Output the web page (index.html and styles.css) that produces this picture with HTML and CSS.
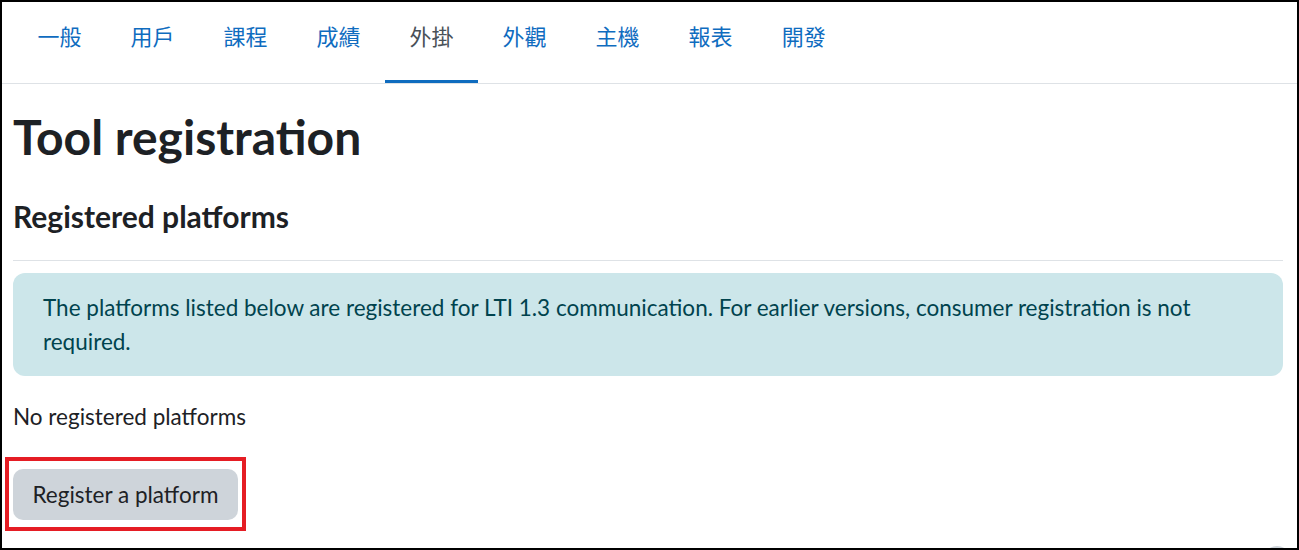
FILE: index.html
```html
<!DOCTYPE html>
<html lang="zh-Hant">
<head>
<meta charset="utf-8">
<title>Tool registration</title>
<link rel="stylesheet" href="styles.css">
</head>
<body>
<div class="frame">
  <nav class="tabs">
    <a class="tab" href="#">一般</a>
    <a class="tab" href="#">用戶</a>
    <a class="tab" href="#">課程</a>
    <a class="tab" href="#">成績</a>
    <a class="tab active" href="#">外掛</a>
    <a class="tab" href="#">外觀</a>
    <a class="tab" href="#">主機</a>
    <a class="tab" href="#">報表</a>
    <a class="tab" href="#">開發</a>
  </nav>
  <main class="content">
    <h1 class="page-title">Tool registration</h1>
    <h2 class="section-title">Registered platforms</h2>
    <hr class="divider">
    <div class="alert">The platforms listed below are registered for LTI 1.3 communication. For earlier versions, consumer registration is not required.</div>
    <p class="empty">No registered platforms</p>
    <div class="actions">
      <button class="btn" type="button">Register a platform</button>
    </div>
  </main>
  <span class="float-btn"></span>
</div>
</body>
</html>
```
FILE: styles.css
```css
html, body {
  margin: 0;
  padding: 0;
  background: #ffffff;
}
body {
  font-family: Lato, "Noto Sans CJK TC", sans-serif;
  color: #1d2125;
}
.frame {
  position: relative;
  box-sizing: border-box;
  width: 1299px;
  height: 550px;
  border: 2px solid #000000;
  overflow: hidden;
}
.tabs {
  display: flex;
  padding-left: 11px;
  border-bottom: 1px solid #dee2e6;
  height: 81px;
}
.tab {
  box-sizing: border-box;
  display: block;
  height: 81px;
  padding: 17px 24.5px 0;
  font-family: "Noto Sans CJK TC", sans-serif;
  font-size: 22px;
  line-height: 33px;
  color: #0f6cbf;
  text-decoration: none;
  border-bottom: 3px solid transparent;
}
.tab.active {
  color: #495057;
  border-bottom-color: #0f6cbf;
}
.content {
  padding: 0 14px 0 11px;
}
.page-title {
  margin: 24px 0 0;
  font-size: 48px;
  line-height: 58px;
  font-weight: 700;
  color: #1d2125;
}
.section-title {
  margin: 32px 0 0;
  font-size: 30px;
  line-height: 36px;
  font-weight: 700;
  color: #1d2125;
}
.divider {
  margin: 26px 0 0;
  border: 0;
  border-top: 1px solid #dee2e6;
  height: 0;
}
.alert {
  margin-top: 12px;
  padding: 18px 30px 17px;
  background: #cce6ea;
  color: #00434e;
  border-radius: 12px;
  font-size: 22.5px;
  line-height: 33.75px;
}
.empty {
  margin: 24px 0 0;
  font-size: 22.5px;
  line-height: 33.75px;
}
.actions {
  margin-top: 36px;
}
.btn {
  position: relative;
  box-sizing: border-box;
  height: 51px;
  padding: 0 19.5px;
  border: 0;
  border-radius: 10px;
  background: #ced4da;
  color: #1d2125;
  font-family: inherit;
  font-size: 22.5px;
  line-height: 33.75px;
}
.btn::after {
  content: "";
  position: absolute;
  top: -12px;
  left: -8px;
  right: -8px;
  bottom: -11px;
  border: 4px solid #e51d24;
}
.float-btn {
  position: absolute;
  right: 6px;
  bottom: -26px;
  width: 28px;
  height: 28px;
  border-radius: 50%;
  background: #ced4da;
}
```
